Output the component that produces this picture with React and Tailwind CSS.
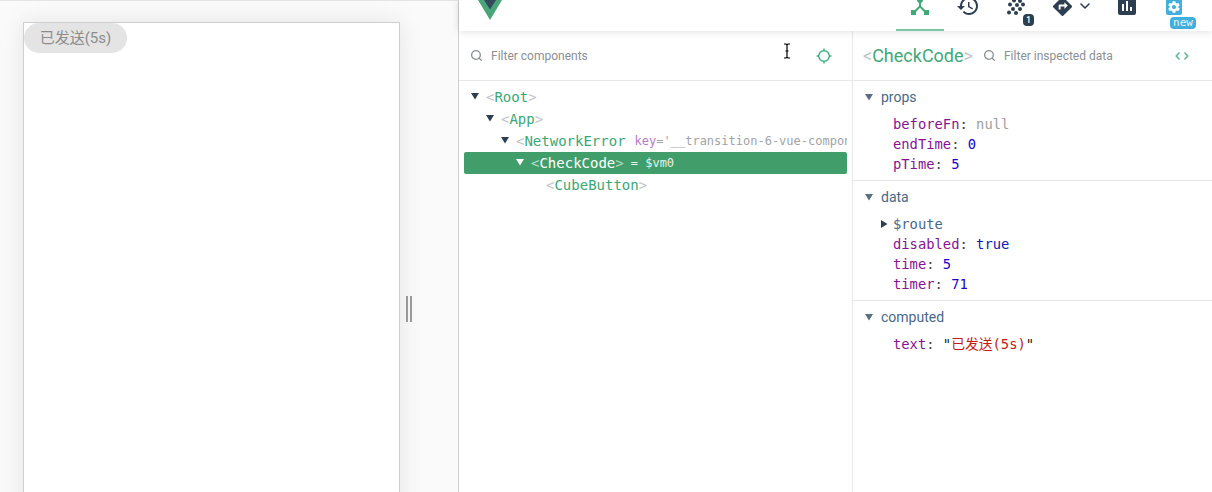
import { Search, ChevronDown } from 'lucide-react';

const SANS = 'font-["Roboto","Noto_Sans_CJK_SC",sans-serif]';
const MONO = 'font-["DejaVu_Sans_Mono","Noto_Sans_CJK_SC",monospace]';

function Icon({ d, className }) {
  return (
    <svg viewBox="0 0 24 24" className={className} fill="currentColor">
      <path d={d} />
    </svg>
  );
}

const ICONS = {
  hub: 'M17 16l-4-4V8.82C14.16 8.4 15 7.3 15 6c0-1.66-1.34-3-3-3S9 4.34 9 6c0 1.3.84 2.4 2 2.82V12l-4 4H3v5h5v-3.05l4-4.2 4 4.2V21h5v-5h-4z',
  history: 'M13 3c-4.97 0-9 4.03-9 9H1l3.89 3.89.07.14L9 12H6c0-3.87 3.13-7 7-7s7 3.13 7 7-3.13 7-7 7c-1.93 0-3.68-.79-4.94-2.06l-1.42 1.42C8.27 19.99 10.51 21 13 21c4.97 0 9-4.03 9-9s-4.03-9-9-9zm-1 5v5l4.28 2.54.72-1.21-3.5-2.08V8H12z',
  route: 'M21.71 11.29l-9-9c-.39-.39-1.02-.39-1.41 0l-9 9c-.39.39-.39 1.02 0 1.41l9 9c.39.39 1.02.39 1.41 0l9-9c.39-.38.39-1.01 0-1.41zM14 14.5V12h-4v3H8v-4c0-.55.45-1 1-1h5V7.5l3.5 3.5-3.5 3.5z',
  chart: 'M19 3H5c-1.1 0-2 .9-2 2v14c0 1.1.9 2 2 2h14c1.1 0 2-.9 2-2V5c0-1.1-.9-2-2-2zM9 17H7v-7h2v7zm4 0h-2V7h2v10zm4 0h-2v-4h2v4z',
  gear: 'M19.43 12.98c.04-.32.07-.64.07-.98s-.03-.66-.07-.98l2.11-1.65c.19-.15.24-.42.12-.64l-2-3.46c-.12-.22-.39-.3-.61-.22l-2.49 1c-.52-.4-1.08-.73-1.69-.98l-.38-2.65C14.46 2.18 14.25 2 14 2h-4c-.25 0-.46.18-.49.42l-.38 2.65c-.61.25-1.17.59-1.69.98l-2.49-1c-.23-.09-.49 0-.61.22l-2 3.46c-.13.22-.07.49.12.64l2.11 1.65c-.04.32-.07.65-.07.98s.03.66.07.98l-2.11 1.65c-.19.15-.24.42-.12.64l2 3.46c.12.22.39.3.61.22l2.49-1c.52.4 1.08.73 1.69.98l.38 2.65c.03.24.24.42.49.42h4c.25 0 .46-.18.49-.42l.38-2.65c.61-.25 1.17-.59 1.69-.98l2.49 1c.23.09.49 0 .61-.22l2-3.46c.12-.22.07-.49-.12-.64l-2.11-1.65zM12 15.5c-1.93 0-3.5-1.57-3.5-3.5s1.57-3.5 3.5-3.5 3.5 1.57 3.5 3.5-1.57 3.5-3.5 3.5z',
};

function VuexIcon() {
  // dots on a slanted lattice
  const dots = [
    [8, 0.5], [14, 1], [4, 4.5], [11, 5], [17, 4.5],
    [7, 9], [14, 9], [3, 12.5], [10, 13],
  ];
  return (
    <svg width="20" height="16" viewBox="0 0 20 16" className="text-[#2c3e50]" fill="currentColor">
      {dots.map(([cx, cy], i) => <circle key={i} cx={cx} cy={cy} r={2} />)}
    </svg>
  );
}

function Tab({ width, active, children }) {
  return (
    <div className={`relative h-full flex justify-center shrink-0 ${width} ${active ? 'border-b-2 border-[#7ac7a3]' : ''}`}>
      {children}
    </div>
  );
}

function Header() {
  return (
    <header className="relative z-10 h-[31px] shrink-0 bg-white shadow-[0_0_8px_rgba(0,0,0,0.15)] flex items-start pr-[14px]">
      <svg viewBox="0 0 24 20" className="w-[24px] h-[20px] ml-[19px] shrink-0">
        <path d="M0 0h24L12 20z" fill="#4aa578" />
        <path d="M6 0h12l-6 9.5z" fill="#35495e" />
      </svg>
      <nav className="ml-auto flex h-full">
        <Tab width="w-[48px]" active>
          <Icon d={ICONS.hub} className="w-6 h-6 -mt-[6px] text-[#42a878]" />
        </Tab>
        <Tab width="w-[48px]">
          <Icon d={ICONS.history} className="w-6 h-6 -mt-[6px] text-[#2c3e50]" />
        </Tab>
        <Tab width="w-[48px]">
          <VuexIcon />
          <span className="absolute left-[31px] top-[14px] w-[11px] h-[12px] rounded-[4px] bg-[#2c3e50] text-white text-[9px] leading-[12px] text-center font-medium">1</span>
        </Tab>
        <Tab width="w-[64px]">
          <div className="flex items-start">
            <Icon d={ICONS.route} className="w-[23px] h-[23px] -mt-[5px] text-[#2c3e50]" />
            <ChevronDown className="w-[16px] h-[16px] -mt-[2px] ml-[3px] text-[#2c3e50]" strokeWidth={2.4} />
          </div>
        </Tab>
        <Tab width="w-[46px]">
          <Icon d={ICONS.chart} className="w-[24px] h-[24px] -mt-[6px] text-[#2c3e50]" />
        </Tab>
        <Tab width="w-[48px]">
          <span className="w-[16px] h-[16px] -mt-[1px] rounded-[2px] bg-[#42aedc] flex items-center justify-center">
            <Icon d={ICONS.gear} className="w-[14px] h-[14px] text-white" />
          </span>
          <span className={`absolute left-[20px] top-[17px] w-[26px] h-[12px] rounded-[4px] bg-[#42aedc] text-[#e6f5fb] text-[11px] leading-[11px] text-center ${MONO}`}>new</span>
        </Tab>
      </nav>
    </header>
  );
}

function Arrow({ dir = 'down', className = 'text-[#2c3e50]' }) {
  return (
    <svg width="8" height="8" viewBox="0 0 8 8" className={`shrink-0 ${className}`} fill="currentColor">
      {dir === 'down' ? <path d="M0 1h8L4 7.5z" /> : <path d="M1 0l6.5 4L1 8z" />}
    </svg>
  );
}

const Bracket = ({ c, light }) => <span className={light ? 'text-[#b5dcc8]' : 'text-[#c0c4c8]'}>{c}</span>;

function TreeRow({ indent, name, arrow, selected, open, children }) {
  return (
    <div
      style={{ paddingLeft: indent }}
      className={`h-[22px] flex items-center whitespace-nowrap overflow-hidden rounded-[2px] ${MONO} text-[14px] ${selected ? 'bg-[#419e6b]' : ''}`}
    >
      <span className="w-[15px] shrink-0 -mt-[3px]">
        {arrow && <Arrow className={selected ? 'text-white' : 'text-[#2c3e50]'} />}
      </span>
      <span className={selected ? 'text-white' : 'text-[#3ba776]'}>
        <Bracket c="<" light={selected} />{name}{!open && <Bracket c=">" light={selected} />}
      </span>
      {children}
    </div>
  );
}

function Tree() {
  return (
    <div className="px-[5px] pt-[5px]">
      <TreeRow indent={7} name="Root" arrow />
      <TreeRow indent={22} name="App" arrow />
      <TreeRow indent={37} name="NetworkError" arrow open>
        <span className="ml-[9px] text-[12px] text-[#a0a4a8]">
          <span className="text-[#b57cc4]">key</span>='__transition-6-vue-component-router-view'
        </span>
      </TreeRow>
      <TreeRow indent={52} name="CheckCode" arrow selected>
        <span className="ml-[7px] text-[12px] text-[#e4f2ea]">= $vm0</span>
      </TreeRow>
      <TreeRow indent={67} name="CubeButton" />
    </div>
  );
}

function Section({ title, border, children }) {
  return (
    <section className={`pt-[6px] pb-[6px] ${border ? 'border-b border-[#e8e8e8]' : ''}`}>
      <div className={`flex items-center h-[20px] pl-[12px] text-[14px] text-[#486887] ${SANS}`}>
        <span className="w-[16px] -mt-[1px]"><Arrow className="text-[#5a6f84]" /></span>
        {title}
      </div>
      <div className={`mt-[7px] pl-[40px] ${MONO} text-[13.8px] leading-[20px]`}>{children}</div>
    </section>
  );
}

function Prop({ name, value, color, route }) {
  return (
    <div className="relative h-[20px] whitespace-nowrap">
      {route && (
        <span className="absolute -left-[13px] top-[6px]"><Arrow dir="right" /></span>
      )}
      <span className={route ? 'text-[#486887]' : 'text-[#881391]'}>{name}</span>
      {!route && <span className="text-[#444]">: </span>}
      <span className={color}>{value}</span>
    </div>
  );
}

function SearchRow({ placeholder }) {
  return (
    <div className={`flex items-center gap-[8px] text-[12px] text-[#8a8f94] ${SANS}`}>
      <Search className="w-[13px] h-[13px] text-[#8a8f94]" strokeWidth={2.4} />
      {placeholder}
    </div>
  );
}

function Inspector() {
  return (
    <aside className="flex-1 min-w-0 flex flex-col">
      <div className="h-[50px] shrink-0 border-b border-[#e8e8e8] flex items-center pl-[10px] pr-[23px]">
        <span className={`text-[18px] -mt-[1px] text-[#42a878] ${SANS}`}>
          <span className="text-[#c0c4c8]">&lt;</span>CheckCode<span className="text-[#c0c4c8]">&gt;</span>
        </span>
        <div className="ml-[10px]"><SearchRow placeholder="Filter inspected data" /></div>
        <svg viewBox="0 0 14 10" className="ml-auto w-[14px] h-[10px] text-[#5abb90]" fill="none" stroke="currentColor" strokeWidth="1.5">
          <path d="M4.5 1.5L1.2 5l3.3 3.5M9.5 1.5L12.8 5 9.5 8.5" />
        </svg>
      </div>
      <Section title="props" border>
        <Prop name="beforeFn" value="null" color="text-[#a0a0a0]" />
        <Prop name="endTime" value="0" color="text-[#1c00cf]" />
        <Prop name="pTime" value="5" color="text-[#1c00cf]" />
      </Section>
      <Section title="data" border>
        <Prop name="$route" route />
        <Prop name="disabled" value="true" color="text-[#0d22aa]" />
        <Prop name="time" value="5" color="text-[#1c00cf]" />
        <Prop name="timer" value="71" color="text-[#1c00cf]" />
      </Section>
      <Section title="computed">
        <Prop
          name="text"
          value={<><span className="text-[#222]">"</span><span className="text-[#c41a16]">已发送(5s)</span><span className="text-[#222]">"</span></>}
        />
      </Section>
    </aside>
  );
}

export default function App() {
  return (
    <div className={`relative w-[1212px] h-[492px] overflow-hidden bg-white flex ${SANS}`}>
      {/* page preview */}
      <div className="relative w-[459px] h-full shrink-0 bg-[#fafafa] border-r border-[#cfcfcf] border-t border-t-[#e4e4e4] pl-[23px] pt-[21px] overflow-hidden">
        <div className="w-[377px] h-[520px] bg-white border border-[#cfcfcf] shadow-[0_0_22px_rgba(0,0,0,0.09)]">
          <button className="w-[103px] h-[30px] rounded-full bg-[#e4e4e4] text-[15px] text-[#8c8c8c] font-['Roboto','Noto_Sans_CJK_SC',sans-serif]">
            已发送(5s)
          </button>
        </div>
        <div className="absolute left-[406px] top-[295px] flex gap-[2px]">
          <span className="w-[2px] h-[26px] bg-[#999]" />
          <span className="w-[2px] h-[26px] bg-[#999]" />
        </div>
      </div>

      {/* devtools */}
      <div className="flex-1 min-w-0 flex flex-col">
        <Header />
        <div className="flex-1 flex min-h-0">
          <main className="w-[394px] shrink-0 border-r border-[#e8e8e8]">
            <div className="h-[50px] border-b border-[#e8e8e8] flex items-center pl-[11px] pr-[20px]">
              <SearchRow placeholder="Filter components" />
              <svg viewBox="0 0 16 16" className="ml-auto w-[16px] h-[16px] text-[#45b184]" fill="none" stroke="currentColor" strokeWidth="1.5">
                <circle cx="8" cy="8" r="5.3" />
                <path d="M8 0.5v2.5M8 13v2.5M0.5 8H3M13 8h2.5" />
              </svg>
            </div>
            <Tree />
          </main>
          <Inspector />
        </div>
      </div>

      {/* text cursor */}
      <svg viewBox="0 0 8 16" className="absolute left-[783px] top-[43px] w-[8px] h-[16px] text-black" fill="none" stroke="currentColor" strokeWidth="1.2">
        <path d="M1 1h2l1 1 1-1h2M4 2v12M1 15h2l1-1 1 1h2M2.5 8h3" />
      </svg>
    </div>
  );
}
